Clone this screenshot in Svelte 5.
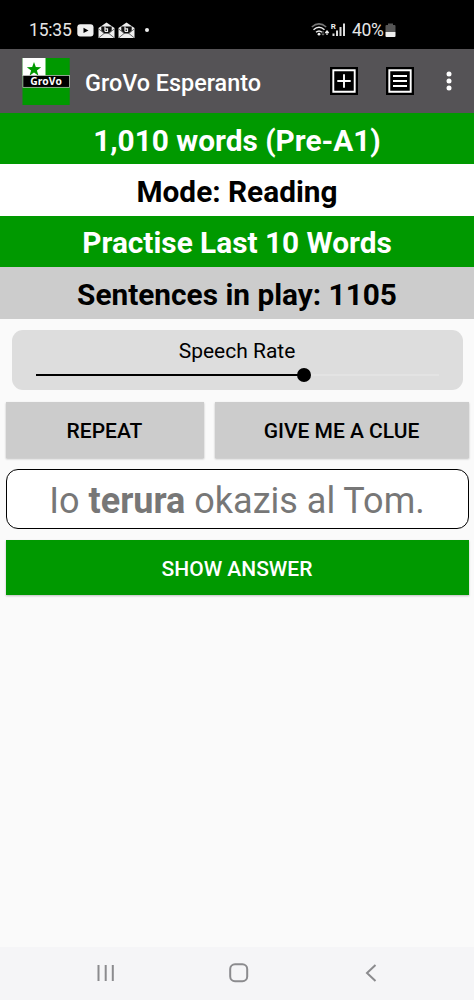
<script lang="ts">
  let speechRate = $state(66.5);

  const banners = [
    { text: "1,010 words (Pre-A1)", tone: "green" },
    { text: "Mode: Reading", tone: "white" },
    { text: "Practise Last 10 Words", tone: "green" },
    { text: "Sentences in play: 1105", tone: "grey" },
  ];
</script>

{#snippet mail()}
  <svg class="mail" width="17" height="17" viewBox="0 0 17 17">
    <path d="M.5 6 8.500.5l8 5.500V16H.5z" fill="#eee" />
    <path d="M3.300 4.500h10.400v4.300L11 11H6L3.300 8.800z" fill="#111" />
    <path d="M7 4.500v5M7 6.800h2.500v2.700H7" fill="none" stroke="#eee" stroke-width="1.200" />
    <path d="m.7 7 5.800 4.600M16.300 7l-5.800 4.600M.8 15.800l5.400-4.400h4.600l5.400 4.400" fill="none" stroke="#333" stroke-width=".7" />
  </svg>
{/snippet}

<div class="screen">
  <div class="status">
    <span class="time">15:35</span>
    <svg class="video" width="17" height="13" viewBox="0 0 17 13">
      <rect x=".3" y=".3" width="16.200" height="12.200" rx="3" fill="#eee" />
      <path d="m6.500 3.800 5 2.600-5 2.600z" fill="#000" />
    </svg>
    {@render mail()}
    {@render mail()}
    <span class="dot"></span>

    <svg class="signal" width="36" height="16" viewBox="0 0 36 16">
      <g fill="none" stroke-width="1.500">
        <path d="M.8 5Q8-1.300 15.200 5" stroke="#777" />
        <path d="M2.500 7.700Q8 2.800 13.500 7.700M5 10.300q3-2.600 6 0" stroke="#eee" />
      </g>
      <circle cx="8" cy="12.200" r="1.400" fill="#eee" />
      <path d="M12 9v4M10.500 11.700l1.500 1.500 1.500-1.500" fill="none" stroke="#777" />
      <path d="M16 13V9.500M14.300 11 16 9l1.700 2" fill="none" stroke="#eee" stroke-width="1.200" />
      <text x="19.800" y="6.800" font-size="8" font-weight="700" fill="#eee">R</text>
      <path d="M22.500 11.500V14M26 8.500V14M29.500 5V14M33 1.500V14" stroke="#ddd" stroke-width="2" />
    </svg>
    <span class="percent">40%</span>
    <svg width="11" height="15" viewBox="0 0 11 15">
      <path d="M3 .5h5v1.500h1.500q1 0 1 1V9H.5V3q0-1 1-1H3z" fill="#555" />
      <path d="M.5 9h10v4q0 1-1 1h-8q-1 0-1-1z" fill="#eee" />
    </svg>
  </div>

  <header class="appbar">
    <svg class="logo" width="48" height="47" viewBox="0 0 48 47">
      <rect x=".5" width="47.200" height="47" fill="#090" />
      <rect x=".5" width="23" height="18" fill="#fff" />
      <path d="m12 4 1.800 5.100 5.400.1-4.300 3.300 1.600 5.200-4.500-3.100-4.500 3.100 1.600-5.200L4.800 9.200l5.400-.1z" fill="#090" />
      <rect x=".9" y="17.500" width="46.500" height="11.800" fill="#000" stroke="#ccc" stroke-width=".7" />
      <text x="24" y="26.800" text-anchor="middle">GroVo</text>
    </svg>
    <h1>GroVo Esperanto</h1>
    <button class="tool" aria-label="Add">
      <svg width="28" height="28" viewBox="0 0 28 28">
        <rect width="28" height="28" fill="#000" />
        <path d="M3.300 3.300h21.400v21.400H3.300zM14 7.300v13.400M7.300 14h13.400" fill="none" stroke="#fff" stroke-width="1.900" />
      </svg>
    </button>
    <button class="tool" aria-label="List">
      <svg width="28" height="28" viewBox="0 0 28 28">
        <rect width="28" height="28" fill="#000" />
        <path d="M3.300 3.300h21.400v21.400H3.300zM7 9h14M7 14h14M7 19h14" fill="none" stroke="#fff" stroke-width="1.900" />
      </svg>
    </button>
    <button class="more" aria-label="More">
      <svg width="6" height="20" viewBox="0 0 6 20" fill="#fff">
        <circle cx="3" cy="3" r="2.500" />
        <circle cx="3" cy="10" r="2.500" />
        <circle cx="3" cy="17" r="2.500" />
      </svg>
    </button>
  </header>

  {#each banners as banner}
    <div class="banner {banner.tone}">{banner.text}</div>
  {/each}

  <main>
    <div class="rate">
      <div class="label">Speech Rate</div>
      <div class="track">
        <div class="fill" style="width: {speechRate}%"></div>
        <div class="thumb" style="left: {speechRate}%"></div>
      </div>
    </div>

    <div class="row">
      <button class="btn repeat">REPEAT</button>
      <button class="btn clue">GIVE ME A CLUE</button>
    </div>

    <div class="sentence"><span>Io <b>terura</b> okazis al Tom.</span></div>

    <button class="btn answer">SHOW ANSWER</button>
  </main>

  <nav>
    <svg width="18" height="18" viewBox="0 0 18 18">
      <path d="M1.500 1v16M8.700 1v16M15.800 1v16" />
    </svg>
    <svg class="home" width="20" height="20" viewBox="0 0 20 20">
      <rect x="1.200" y="1.200" width="17" height="17" rx="4.800" />
    </svg>
    <svg width="12" height="18" viewBox="0 0 12 18">
      <path d="M10.500 1 2 9l8.500 8" />
    </svg>
  </nav>
</div>

<style>
  :global(body) {
    margin: 0;
  }

  .screen {
    display: flex;
    flex-direction: column;
    width: 474px;
    height: 1000px;
    overflow: hidden;
    background: #fafafa;
    font-family: Roboto, sans-serif;
    color: #000;
  }

  button {
    border: none;
    padding: 0;
    font-family: inherit;
    cursor: pointer;
  }

  svg {
    display: block;
    flex: none;
  }

  .status {
    display: flex;
    align-items: center;
    box-sizing: border-box;
    height: 49px;
    padding: 11px 78px 0 29px;
    background: #000;
    color: #e6e6e6;
    font-size: 17.5px;
  }

  .time {
    width: 48px;
    letter-spacing: -0.2px;
  }

  .mail {
    margin-left: 3.7px;
  }

  .dot {
    width: 4px;
    height: 4px;
    margin-left: 10px;
    border-radius: 50%;
    background: #eee;
  }

  .signal {
    margin-left: auto;
  }

  .percent {
    width: 32px;
    margin: 0 1px 0 5px;
    letter-spacing: -0.3px;
  }

  .appbar {
    display: flex;
    align-items: center;
    box-sizing: border-box;
    height: 64px;
    padding: 0 22px;
    background: #555356;
  }

  .logo text {
    font-family: "Open Sans", sans-serif;
    font-size: 10.3px;
    font-weight: 700;
    fill: #fff;
  }

  h1 {
    flex: 1;
    margin: 3px 0 0 15px;
    font-size: 23.4px;
    font-weight: 500;
    color: #fff;
    white-space: nowrap;
  }

  .tool {
    margin-right: 28px;
    background: none;
  }

  .more {
    margin-left: 4px;
    background: none;
  }

  .banner {
    display: flex;
    align-items: center;
    justify-content: center;
    box-sizing: border-box;
    flex: none;
    height: 51.4px;
    padding-top: 3px;
    font-size: 29.8px;
    font-weight: 700;
  }

  .green {
    background: #090;
    color: #fff;
  }

  .white {
    background: #fff;
  }

  .grey {
    background: #ccc;
  }

  main {
    flex: 1;
    padding: 11.4px 5.5px 0;
  }

  .rate {
    box-sizing: border-box;
    height: 60.5px;
    margin: 0 6px;
    padding: 8px 24px 0;
    border-radius: 11px;
    background: #ddd;
  }

  .label {
    line-height: 26px;
    font-size: 21px;
    text-align: center;
  }

  .track {
    position: relative;
    height: 2px;
    margin-top: 10px;
    background: #e3e3e3;
  }

  .fill {
    height: 2px;
    background: #000;
  }

  .thumb {
    position: absolute;
    top: -6px;
    width: 14px;
    height: 14px;
    margin-left: -6.5px;
    border-radius: 50%;
    background: #000;
  }

  .row {
    display: flex;
    gap: 11px;
    margin-top: 12px;
  }

  .btn {
    height: 55.5px;
    padding-top: 2px;
    background: #ccc;
    color: #000;
    font-size: 21px;
    font-weight: 500;
    box-shadow: 0 1px 2px rgba(0, 0, 0, 0.25);
  }

  .repeat {
    width: 198px;
  }

  .clue {
    flex: 1;
  }

  .sentence {
    display: flex;
    align-items: center;
    justify-content: center;
    box-sizing: border-box;
    height: 59.5px;
    margin-top: 11.5px;
    padding-top: 3px;
    border: 1.4px solid #000;
    border-radius: 12px;
    background: #fff;
    color: #777;
    font-size: 36px;
  }

  .answer {
    width: 100%;
    margin-top: 11px;
    background: #090;
    color: #fff;
  }

  nav {
    display: flex;
    align-items: center;
    justify-content: space-between;
    box-sizing: border-box;
    height: 53px;
    padding: 0 97px 1px;
    background: #f5f5f7;
  }

  .home {
    margin-right: 3px;
  }

  nav svg {
    fill: none;
    stroke: #8b8b8e;
    stroke-width: 2;
  }
</style>
